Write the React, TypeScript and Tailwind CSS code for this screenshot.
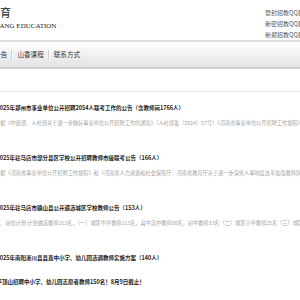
const qqLines = ["登封招教QQ群：", "新密招教QQ群：", "新郑招教QQ群："];

const navLinks = ["网站公告", "山香课程", "联系方式"];

const posts = [
  {
    title: "2025年郑州市事业单位公开招聘2054人联考工作的公告（含教师岗1766人）",
    summary:
      "根据《中组部、人社部关于进一步做好事业单位公开招聘工作的通知》（人社部发〔2024〕57号）《河南省事业单位公开招聘工作规程》等有关规定",
  },
  {
    title: "2025年驻马店市部分县区学校公开招聘教师市级联考公告（166人）",
    summary:
      "根据《河南省事业单位公开招聘工作规程》和《河南省人力资源和社会保障厅、河南省教育厅关于进一步深化人事制度改革加强教师队伍建设的通知》",
  },
  {
    title: "2025年驻马店市确山县公开遴选城区学校教师公告（153人）",
    summary:
      "一、岗位计划 计划遴选教师153名，（一）城区中学教师113名，其中高中教师80名，初中教师33名（二）城区小学教师25名（三）城区幼儿园教师15名",
  },
  {
    title: "2025年南阳淅川县县直中小学、幼儿园选调教师实施方案（140人）",
    summary: "",
  },
  {
    title: "平顶山招聘中小学、幼儿园志愿者教师150名！8月9日截止！",
    summary: "",
  },
];

const cjk = { fontFamily: '"Noto Sans CJK SC", "Liberation Sans", sans-serif' };

export default function App() {
  return (
    <div className="h-[300px] w-[300px] overflow-hidden bg-white" style={cjk}>
      <header className="flex h-[40px]">
        <div className="-ml-[33px] flex-1 pt-[5px] text-[#222]">
          <p className="text-[11px] leading-[14px]" style={{ fontFamily: '"Noto Sans CJK SC", serif' }}>
            山香教育
          </p>
          <p
            className="mt-[3px] ml-[6px] whitespace-nowrap text-[7px] leading-[9px]"
            style={{ fontFamily: '"Liberation Serif", serif' }}
          >
            SHANXIANG EDUCATION
          </p>
        </div>
        <div className="w-[35px] whitespace-nowrap pt-[7px] text-[6px] leading-[11px] text-[#555]">
          {qqLines.map((line) => (
            <p key={line}>{line}</p>
          ))}
        </div>
      </header>

      <nav className="flex h-[29px] items-center border-t-2 border-b-2 border-t-[#dcdcdc] border-b-[#cfcfcf] bg-gradient-to-b from-white to-[#e3e3e3]">
        <div className="-ml-[23px] flex items-center text-[6.6px] text-[#333]">
          {navLinks.map((link, i) => (
            <span key={link} className="flex items-center">
              {i > 0 && <span className="h-[10px] w-[2px] border-l border-r border-l-[#cfcfcf] border-r-white" />}
              <span className="px-[4px]">{link}</span>
            </span>
          ))}
        </div>
      </nav>

      <div className="mt-[22px] border-t border-[#ececec]">
        {posts.map((post) => (
          <div key={post.title} className={post.summary ? "-ml-[3.5px] pt-[10px] pb-[13px]" : "-ml-[3.5px] pt-[10px] pb-[2px]"}>
            <p className="whitespace-nowrap text-[5.5px] font-bold leading-[12px] text-[#1a1a1a]">{post.title}</p>
            {post.summary && (
              <p className="-ml-[1.5px] mt-[3px] whitespace-nowrap text-[5.2px] leading-[12px] text-[#a3a3a3]">{post.summary}</p>
            )}
          </div>
        ))}
      </div>
    </div>
  );
}
